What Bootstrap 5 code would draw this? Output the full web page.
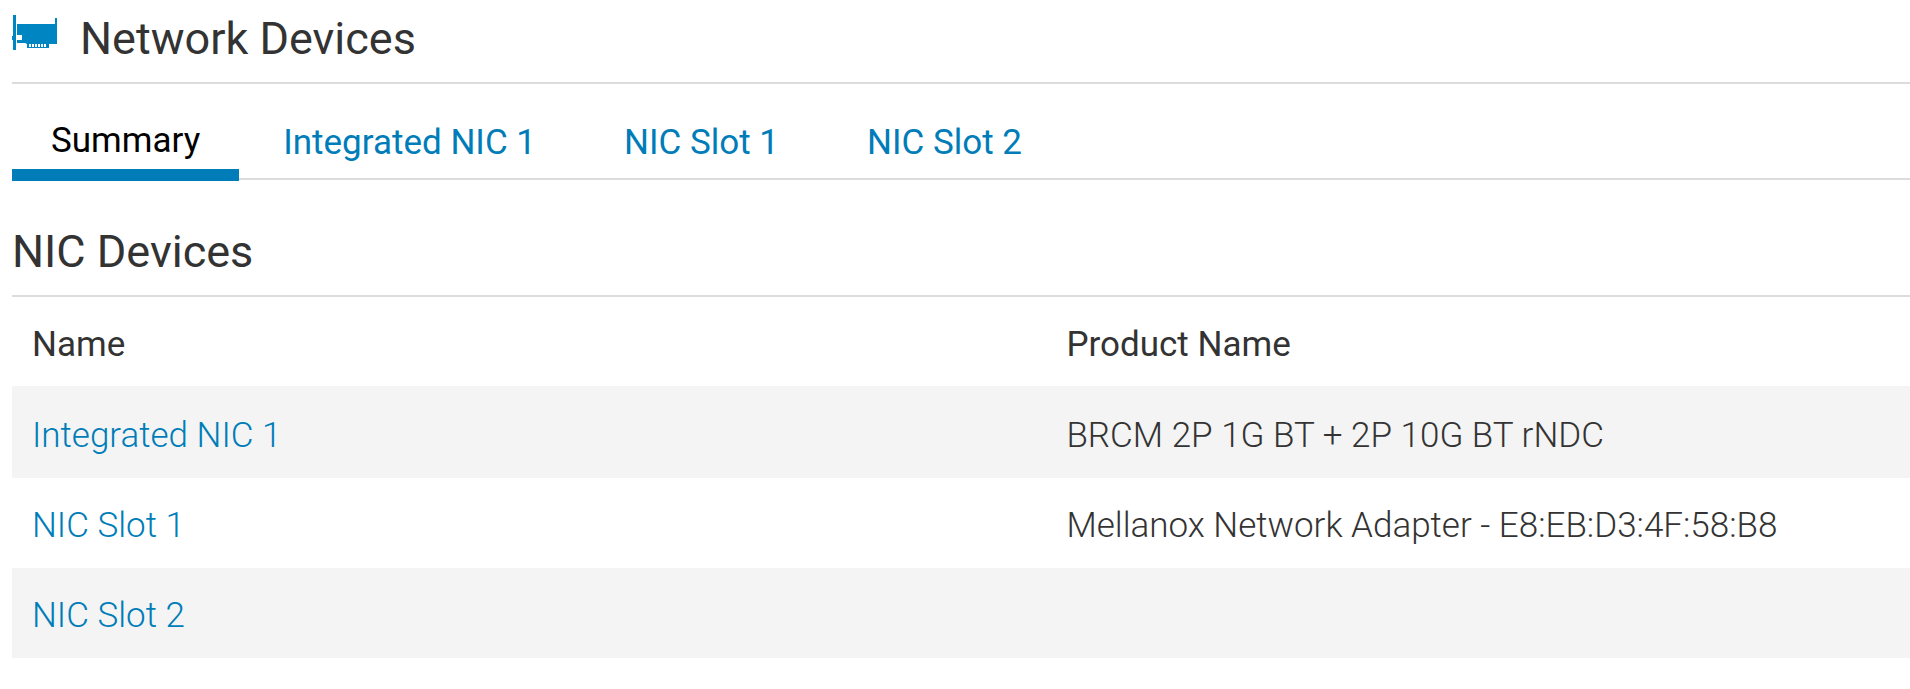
<!DOCTYPE html>
<html lang="en">
<head>
<meta charset="utf-8">
<meta name="viewport" content="width=device-width, initial-scale=1">
<title>Network Devices</title>
<link href="https://cdn.jsdelivr.net/npm/bootstrap@5.3.0/dist/css/bootstrap.min.css" rel="stylesheet">
<style>
  body { font-family: Roboto, "Liberation Sans", sans-serif; font-size: 35px; line-height: 42px; color: #333; background: #fff; }
  .page { padding-left: 12px; }
  .rule-below { border-bottom: 2px solid #dcdcdc; }
  .page-title, .section-title { font-size: 45px; line-height: 56px; font-weight: 400; margin: 0; }
  .page-title { padding: 11px 0 15px; gap: 22px; }
  .device-icon { width: 46px; height: 38px; margin-bottom: 13px; flex: none; }
  .section-title { padding: 44px 0 15px; }
  .device-tabs { --bs-nav-tabs-border-width: 0; padding-top: 34px; border-bottom: 2px solid #dcdcdc; }
  .device-tabs .nav-link { color: #007db8; font-weight: 400; padding: 4px 44px 14px; border: 0; border-radius: 0; background: none; }
  .device-tabs .nav-link.active { color: #000; padding: 2px 39px 7px; border-bottom: 12px solid #007db8; margin-bottom: -3px; background: none; }
  .device-table { --bs-table-bg: transparent; --bs-table-color: #333; margin: 0; table-layout: fixed; }
  .device-table th, .device-table td { padding: 27px 20px 21px; border: 0; height: 90px; }
  .device-table th { font-weight: 400; padding: 26px 20px 20px; }
  .device-table thead th { height: 89px; }
  .device-table td { font-weight: 300; }
  .device-table tbody tr:first-child td { padding-top: 29px; }
  .device-table tbody tr:nth-child(odd) td { background: #f4f4f4; box-shadow: none; }
  .device-table a { color: #007db8; text-decoration: none; }
  .name-col { width: 54.5%; }
</style>
</head>
<body>
<main class="page">
  <h1 class="page-title rule-below d-flex align-items-center">
    <svg class="device-icon" viewBox="0 0 46 38" fill="#0085c3" aria-hidden="true">
      <path d="M1 1h3v35H1zM0 22h1v4H0zM5 10h38V4h2v26h-8v4H15v-4l-2-1H5v-3h5v-5H5z"/>
      <path fill="#fff" d="M17 30h2v3h-2zM20 30h2v3h-2zM23 30h2v3h-2zM26 30h2v3h-2zM29 30h2v3h-2zM32 30h2v3h-2z"/>
    </svg>
    <span>Network Devices</span>
  </h1>

  <nav class="nav nav-tabs device-tabs align-items-end" aria-label="Network devices">
    <a class="nav-link active" aria-current="page" href="#summary">Summary</a>
    <a class="nav-link" href="#integrated-1">Integrated NIC 1</a>
    <a class="nav-link" href="#slot-1">NIC Slot 1</a>
    <a class="nav-link" href="#slot-2">NIC Slot 2</a>
  </nav>

  <section>
    <h2 class="section-title rule-below">NIC Devices</h2>
    <table class="table device-table">
      <thead>
        <tr><th scope="col" class="name-col">Name</th><th scope="col">Product Name</th></tr>
      </thead>
      <tbody>
        <tr><td><a href="#integrated-1">Integrated NIC 1</a></td><td>BRCM 2P 1G BT + 2P 10G BT rNDC</td></tr>
        <tr><td><a href="#slot-1">NIC Slot 1</a></td><td>Mellanox Network Adapter - E8:EB:D3:4F:58:B8</td></tr>
        <tr><td><a href="#slot-2">NIC Slot 2</a></td><td></td></tr>
      </tbody>
    </table>
  </section>
</main>
<script src="https://cdn.jsdelivr.net/npm/bootstrap@5.3.0/dist/js/bootstrap.bundle.min.js"></script>
</body>
</html>
